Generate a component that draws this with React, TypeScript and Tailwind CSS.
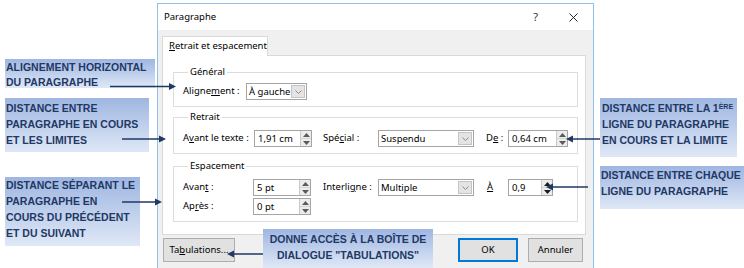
const ui = "font-['Noto_Sans','Open_Sans',sans-serif] text-[9.5px] text-black";

function U({ children }: { children: React.ReactNode }) {
  return <span className="underline underline-offset-[1px]">{children}</span>;
}

function Spin({ dark = false }: { dark?: boolean }) {
  const fill = dark ? "#1c1c1c" : "#5a5a5a";
  return (
    <div className="flex w-[11px] flex-col border-l border-[#c9c9c9] bg-[#ececec]">
      <div className="flex flex-1 items-center justify-center border-b border-[#d4d4d4]">
        <svg width="7" height="4" viewBox="0 0 7 4">
          <polygon points="3.5,0 7,4 0,4" fill={fill} />
        </svg>
      </div>
      <div className="flex flex-1 items-center justify-center">
        <svg width="7" height="4" viewBox="0 0 7 4">
          <polygon points="0,0 7,0 3.5,4" fill={fill} />
        </svg>
      </div>
    </div>
  );
}

function Field({ value, className, dark }: { value: string; className: string; dark?: boolean }) {
  return (
    <div className={`flex h-[17px] border border-[#a5a5a5] bg-white ${className}`}>
      <span className="flex-1 whitespace-nowrap pl-[3px] leading-[15px]">{value}</span>
      <Spin dark={dark} />
    </div>
  );
}

function Select({ value, className }: { value: string; className: string }) {
  return (
    <div className={`flex h-[17px] border border-[#a5a5a5] bg-white ${className}`}>
      <span className="min-w-0 flex-1 overflow-hidden whitespace-nowrap pl-[2px] leading-[15px]">{value}</span>
      <div className="my-px mr-px flex w-[14px] shrink-0 items-center justify-center border border-[#c4c4c4] bg-[#e4e4e4]">
        <svg width="7" height="4" viewBox="0 0 7 4">
          <polyline points="0.5,0.5 3.5,3.5 6.5,0.5" fill="none" stroke="#8a8a8a" strokeWidth="1" />
        </svg>
      </div>
    </div>
  );
}

function Group({ title, children, className = "" }: { title: string; children: React.ReactNode; className?: string }) {
  return (
    <fieldset className={`border border-[#dcdcdc] pl-[9px] ${className}`}>
      <legend className="ml-[5px] px-[2px] leading-[12px]">{title}</legend>
      {children}
    </fieldset>
  );
}

function Callout({ lines, className }: { lines: React.ReactNode[]; className: string }) {
  return (
    <div
      className={`absolute bg-gradient-to-b from-[#9fb6e1] to-[#dfe8f6] font-['Liberation_Sans',Arial,sans-serif] text-[10.5px] font-bold leading-[16px] text-[#1f3864] ${className}`}
    >
      {lines.map((l, i) => (
        <div key={i} className="whitespace-nowrap">
          {l}
        </div>
      ))}
    </div>
  );
}

function Arrows() {
  const c = "#1f3864";
  const right = (x1: number, x2: number, y: number) => (
    <g key={`r${y}`}>
      <line x1={x1} y1={y} x2={x2 - 5} y2={y} stroke={c} strokeWidth="1.5" />
      <polygon points={`${x2},${y} ${x2 - 7},${y - 3.5} ${x2 - 7},${y + 3.5}`} fill={c} />
    </g>
  );
  const left = (x1: number, x2: number, y: number) => (
    <g key={`l${y}`}>
      <line x1={x1} y1={y} x2={x2 + 5} y2={y} stroke={c} strokeWidth="1.5" />
      <polygon points={`${x2},${y} ${x2 + 7},${y - 3.5} ${x2 + 7},${y + 3.5}`} fill={c} />
    </g>
  );
  return (
    <svg className="pointer-events-none absolute left-0 top-0" width="744" height="268">
      {right(110, 176, 86.5)}
      {right(122, 166, 139)}
      {right(122, 162, 202)}
      {left(600, 566, 139)}
      {left(588, 546, 187)}
      {left(263, 227, 254)}
    </svg>
  );
}

export default function App() {
  return (
    <div className={`relative h-[268px] w-[744px] overflow-hidden bg-white ${ui}`}>
      <div className="ml-[157px] pt-[3px]">
        <div className="flex h-[266px] w-[437px] flex-col border border-[#8dc2ee]">
          <div className="flex h-[26px] items-center bg-white pl-[6px]">
            <span className="flex-1">Paragraphe</span>
            <span className="mr-[31px] text-[11px] text-[#333]">?</span>
            <svg className="mr-[15px]" width="9" height="9" viewBox="0 0 9 9">
              <path d="M0.5 0.5L8.5 8.5M8.5 0.5L0.5 8.5" stroke="#222" strokeWidth="1" />
            </svg>
          </div>

          <div className="flex-1 bg-[#f0f0f0] pl-[4px] pt-[6px]">
            <div className="relative z-10 -mb-px flex h-[20px] w-[106px] items-center border border-b-0 border-[#d9d9d9] bg-white pl-[6px]">
              <span className="whitespace-nowrap">
                <U>R</U>etrait et espacement
              </span>
            </div>

            <div className="h-[180px] w-[424px] border border-[#d9d9d9] bg-white pl-[10px] pt-[10px]">
              <Group title="Général" className="w-[405px] pb-[6px]">
                <div className="flex items-center pt-[5px]">
                  <span className="w-[63px] whitespace-nowrap">
                    Aligne<U>m</U>ent :
                  </span>
                  <Select value="À gauche" className="w-[61px]" />
                </div>
              </Group>

              <Group title="Retrait" className="mt-[4px] w-[405px] pb-[6px]">
                <div className="flex items-center pt-[7px]">
                  <span className="w-[71px] whitespace-nowrap">
                    A<U>v</U>ant le texte :
                  </span>
                  <Field value="1,91 cm" className="w-[58px]" />
                  <span className="ml-[11px] w-[55px] whitespace-nowrap">
                    Spé<U>c</U>ial :
                  </span>
                  <Select value="Suspendu" className="w-[96px]" />
                  <span className="ml-[12px] w-[22px] whitespace-nowrap">
                    D<U>e</U> :
                  </span>
                  <Field value="0,64 cm" className="w-[60px]" />
                </div>
              </Group>

              <Group title="Espacement" className="mt-[6px] w-[405px] pb-[6px]">
                <div className="flex items-center pt-[7px]">
                  <span className="w-[70px]">
                    Avan<U>t</U> :
                  </span>
                  <Field value="5 pt" className="w-[58px]" />
                  <span className="ml-[12px] w-[55px] whitespace-nowrap">
                    Interli<U>g</U>ne :
                  </span>
                  <Select value="Multiple" className="w-[96px]" />
                  <span className="ml-[13px] w-[21px]">
                    <U>À</U>
                  </span>
                  <Field value="0,9" className="w-[45px]" dark />
                </div>
                <div className="mt-[2px] flex items-center">
                  <span className="w-[70px]">
                    Ap<U>r</U>ès :
                  </span>
                  <Field value="0 pt" className="w-[58px]" />
                </div>
              </Group>
            </div>

            <div className="mt-[3px] flex h-[24px] w-[424px] items-stretch">
              <button className="ml-px w-[72px] border border-[#adadad] bg-[#e1e1e1]">
                Ta<U>b</U>ulations...
              </button>
              <div className="flex-1" />
              <button className="w-[60px] border-2 border-[#0078d7] bg-[#e1e1e1]">OK</button>
              <button className="ml-[10px] mr-[3px] w-[55px] border border-[#adadad] bg-[#e1e1e1]">Annuler</button>
            </div>
          </div>
        </div>
      </div>

      <Callout className="left-[5px] top-[59px] h-[29px] w-[150px] pl-px pt-px !leading-[15px]" lines={["ALIGNEMENT HORIZONTAL", "DU PARAGRAPHE"]} />
      <Callout
        className="left-[5px] top-[98px] h-[54px] w-[144px] pl-px pt-[2px]"
        lines={["DISTANCE ENTRE", "PARAGRAPHE EN COURS", "ET LES LIMITES"]}
      />
      <Callout
        className="left-[5px] top-[177px] h-[69px] w-[135px] pl-px"
        lines={["DISTANCE SÉPARANT LE", "PARAGRAPHE EN", "COURS DU PRÉCÉDENT", "ET DU SUIVANT"]}
      />
      <Callout
        className="left-[600px] top-[98px] h-[59px] w-[137px] pl-[2px] pt-[2px]"
        lines={[
          <>
            DISTANCE ENTRE LA 1<sup className="text-[7px]">ÈRE</sup>
          </>,
          "LIGNE DU PARAGRAPHE",
          "EN COURS ET LA LIMITE",
        ]}
      />
      <Callout
        className="left-[600px] top-[166px] h-[43px] w-[144px] pl-px pt-px"
        lines={["DISTANCE ENTRE CHAQUE", "LIGNE DU PARAGRAPHE"]}
      />
      <Callout
        className="left-[263px] top-[229px] h-[39px] w-[170px] pt-[2px] text-center"
        lines={["DONNE ACCÈS À LA BOÎTE DE", 'DIALOGUE "TABULATIONS"']}
      />

      <Arrows />
    </div>
  );
}
